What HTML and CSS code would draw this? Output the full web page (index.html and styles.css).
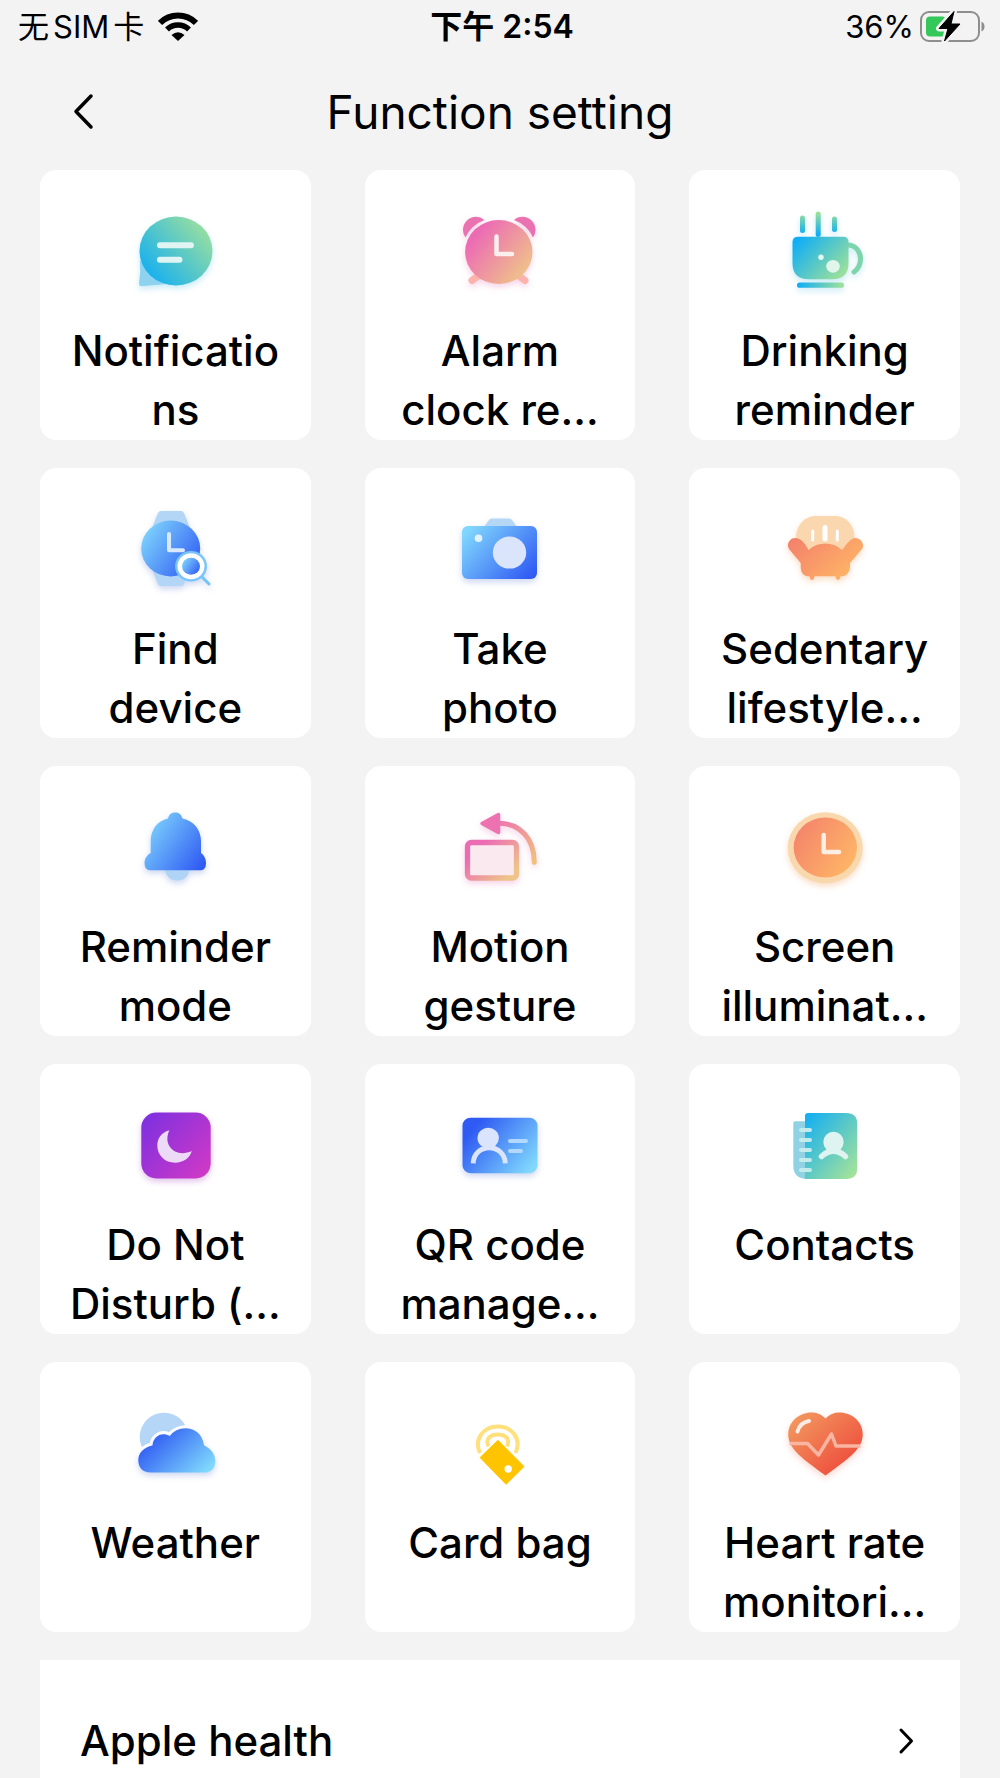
FILE: index.html
```html
<!DOCTYPE html>
<html lang="en">
<head>
    <meta charset="UTF-8">
    <meta name="viewport" content="width=device-width, initial-scale=1.0">
    <title>Function setting</title>
    <link rel="stylesheet" href="styles.css">
</head>
<body>
    <!-- shared gradients -->
    <svg class="defs" width="0" height="0" aria-hidden="true">
        <defs>
            <linearGradient id="teal" x1="0.1" y1="0.85" x2="0.9" y2="0.2"><stop offset="0" stop-color="#16b0f0"/><stop offset="1" stop-color="#94dda2"/></linearGradient>
            <linearGradient id="cup" x1="0" y1="0.2" x2="1" y2="0.9"><stop offset="0" stop-color="#10aef5"/><stop offset="1" stop-color="#a5e494"/></linearGradient>
            <linearGradient id="saucer" gradientUnits="userSpaceOnUse" x1="23" y1="0" x2="70" y2="0"><stop offset="0" stop-color="#10aef5"/><stop offset="1" stop-color="#a5e494"/></linearGradient>
            <linearGradient id="steam" gradientUnits="userSpaceOnUse" x1="0" y1="12" x2="0" y2="34"><stop offset="0" stop-color="#a0e395"/><stop offset="1" stop-color="#10aef5"/></linearGradient>
            <linearGradient id="book" x1="0" y1="0" x2="1" y2="1"><stop offset="0.05" stop-color="#16b0f0"/><stop offset="1" stop-color="#ade694"/></linearGradient>
            <linearGradient id="pink" x1="0.1" y1="0.15" x2="0.95" y2="0.8"><stop offset="0.1" stop-color="#ec6cb4"/><stop offset="1" stop-color="#efc488"/></linearGradient>
            <linearGradient id="pinkLine" gradientUnits="userSpaceOnUse" x1="40" y1="24" x2="84" y2="66"><stop offset="0" stop-color="#ec6cb4"/><stop offset="1" stop-color="#f1c080"/></linearGradient>
            <linearGradient id="blue" x1="0" y1="0.2" x2="1" y2="0.85"><stop offset="0" stop-color="#80d6fd"/><stop offset="1" stop-color="#2f5af3"/></linearGradient>
            <linearGradient id="blueBack" x1="0" y1="0.2" x2="1" y2="0.8"><stop offset="0.1" stop-color="#2f5af3"/><stop offset="1" stop-color="#80d9fd"/></linearGradient>
            <linearGradient id="orange" x1="0" y1="0.2" x2="1" y2="0.8"><stop offset="0" stop-color="#f4836b"/><stop offset="1" stop-color="#ffb866"/></linearGradient>
            <linearGradient id="purple" x1="0" y1="0.1" x2="1" y2="0.9"><stop offset="0" stop-color="#7d30e0"/><stop offset="1" stop-color="#d139c6"/></linearGradient>
            <linearGradient id="red" x1="0.1" y1="0.1" x2="0.8" y2="0.8"><stop offset="0" stop-color="#f2955d"/><stop offset="1" stop-color="#ee523f"/></linearGradient>
        </defs>
    </svg>

    <div class="page">
        <div class="status">
            <div class="status-left">
                <div class="carrier"><span>无</span><span>SIM</span><span>卡</span></div>
                <svg width="40" height="30" viewBox="0 0 40 30" aria-hidden="true">
                    <path d="M2 11A25.500 25.500 0 0 1 38 11" fill="none" stroke="#000" stroke-width="6"/>
                    <path d="M9 17.500A15.500 15.500 0 0 1 31 17.500" fill="none" stroke="#000" stroke-width="5.500"/>
                    <path d="M20 29L13.500 23Q20 17.500 26.500 23Z"/>
                </svg>
            </div>
            <div class="status-time">下午 2:54</div>
            <div class="status-right">
                <span>36%</span>
                <svg width="66" height="32" viewBox="0 0 66 32" aria-hidden="true">
                    <rect x="1" y="1" width="58" height="29" rx="8" fill="none" stroke="#8e8e8e" stroke-width="2"/>
                    <path d="M61.500 10.500Q64.500 12 64.500 15.500T61.500 20.500Z" fill="#8e8e8e"/>
                    <rect x="6" y="5.500" width="20" height="20" rx="4" fill="#34c759"/>
                    <path d="M34 0.500L19 17.500H28L24.500 30L40 13H31Z" stroke="#f3f3f3" stroke-width="6" stroke-linejoin="round" fill="#f3f3f3"/>
                    <path d="M34 0.500L19 17.500H28L24.500 30L40 13H31Z" stroke="#000" stroke-linejoin="round"/>
                </svg>
            </div>
        </div>

        <header class="header">
            <button class="back" type="button" aria-label="Back">
                <svg width="24" height="38" viewBox="0 0 24 38" aria-hidden="true"><path d="M19 3L4 18.500L19 34" fill="none" stroke="#000" stroke-width="3.500" stroke-linecap="round" stroke-linejoin="round"/></svg>
            </button>
            <h1>Function setting</h1>
        </header>

        <main class="grid">
            <button class="card" type="button">
                <svg class="icon glow-teal" viewBox="0 0 100 100" aria-hidden="true">
                    <path d="M15 60Q16 72 14 83Q14 87 18 86L42 84Z" fill="#8dd3f0"/>
                    <ellipse cx="51" cy="51" rx="36.500" ry="34.500" fill="url(#teal)"/>
                    <path d="M35 45.300H66M35 59.700H54.500" stroke="#e0f4f3" stroke-width="6" stroke-linecap="round"/>
                </svg>
                <span class="label">Notificatio<br>ns</span>
            </button>
            <button class="card" type="button">
                <svg class="icon glow-pink" viewBox="0 0 100 100" aria-hidden="true">
                    <path d="M22 80.500L32 73M75 80.500L65 73" stroke="#fdb3ac" stroke-width="7" stroke-linecap="round"/>
                    <path d="M34.500 20A13 13 0 0 0 15.500 37.500Q21 25 34.500 20ZM64 20A13 13 0 0 1 83 37.500Q77.500 25 64 20Z" fill="#eb72b0"/>
                    <ellipse cx="48.800" cy="52" rx="33.700" ry="32" fill="url(#pink)"/>
                    <path d="M46.500 36.500V54H62" fill="none" stroke="#fdeef0" stroke-width="4.500" stroke-linecap="round" stroke-linejoin="round"/>
                </svg>
                <span class="label">Alarm<br>clock re…</span>
            </button>
            <button class="card" type="button">
                <svg class="icon glow-teal" viewBox="0 0 100 100" aria-hidden="true">
                    <path d="M27.500 18V30.500M43.200 14V34.500M59.500 19V29.500" stroke="url(#steam)" stroke-width="5" stroke-linecap="round"/>
                    <path d="M74 45C82 46 85.500 53 85.500 59C85.500 65 83 69 79 72" fill="none" stroke="#7dd5ab" stroke-width="5" stroke-linecap="round"/>
                    <path d="M23 36.700H68Q73.500 36.700 73.500 42V63Q73.500 79.300 57 79.300H34Q17.500 79.300 17.500 63V42Q17.500 36.700 23 36.700Z" fill="url(#cup)"/>
                    <rect x="22" y="82.500" width="47" height="5.300" rx="2.600" fill="url(#saucer)"/>
                    <circle cx="46" cy="57.300" r="2.700" fill="#e6f8f4"/>
                    <ellipse cx="58" cy="66.300" rx="6.800" ry="6.400" fill="#e0f6ea"/>
                </svg>
                <span class="label">Drinking<br>reminder</span>
            </button>

            <button class="card" type="button">
                <svg class="icon glow-blue" viewBox="0 0 100 100" aria-hidden="true">
                    <path d="M36 13H56Q58 13 59 15L65 30V71L59 86Q58 88 56 88H36Q34 88 33 86L27 71V30L33 15Q34 13 36 13Z" fill="#b3d5f6"/>
                    <ellipse cx="45.700" cy="50.500" rx="29.500" ry="28" fill="url(#blue)"/>
                    <path d="M44 36V52.300H58" fill="none" stroke="#dbe9fd" stroke-width="4" stroke-linecap="round" stroke-linejoin="round"/>
                    <path d="M76 78L84 86" stroke="#72c3fb" stroke-width="3" stroke-linecap="round"/>
                    <ellipse cx="66" cy="68.300" rx="16" ry="15.300" fill="#78c4fc"/>
                    <ellipse cx="66" cy="68.300" rx="13.500" ry="13" fill="#fff"/>
                    <ellipse cx="66" cy="68.300" rx="9" ry="8.500" fill="url(#blue)"/>
                </svg>
                <span class="label">Find<br>device</span>
            </button>
            <button class="card" type="button">
                <svg class="icon glow-blue" viewBox="0 0 100 100" aria-hidden="true">
                    <path d="M34 29L39 22Q40 20.500 42 20.500H59Q61 20.500 62 22L67 29Z" fill="#b5d7f6"/>
                    <rect x="12" y="28" width="75" height="53" rx="6" fill="url(#blue)"/>
                    <circle cx="28.500" cy="40.300" r="3.800" fill="#e3f3fe"/>
                    <ellipse cx="59.500" cy="54.600" rx="16.700" ry="16" fill="#dae5fc"/>
                </svg>
                <span class="label">Take<br>photo</span>
            </button>
            <button class="card" type="button">
                <svg class="icon glow-orange" viewBox="0 0 100 100" aria-hidden="true">
                    <path d="M21 41C21 26 30 18 42 18H59C71 18 79.500 26 79.500 41L68 60H33Z" fill="#fad7ae"/>
                    <path d="M37.700 33V42M62.300 33V42" stroke="#fff" stroke-width="3" stroke-linecap="round"/>
                    <path d="M50 29.500V41" stroke="#fff" stroke-width="5" stroke-linecap="round"/>
                    <path d="M20 40C26 40 30 45 33.500 52Q41 45.600 50.300 45.600T67 52C70 48 74 43 77 41C83 37 91 45 87 51L75 65V68C75 75 71 78.300 66 78.300H65.500Q65 82 63 82T60.500 78.300H39.500Q39 82 37 82T34.500 78.300H34C29 78.300 25.700 75 25.700 69V65L14 51C11 46 15 40 20 40Z" fill="url(#orange)"/>
                </svg>
                <span class="label">Sedentary<br>lifestyle…</span>
            </button>

            <button class="card" type="button">
                <svg class="icon glow-blue" viewBox="0 0 100 100" aria-hidden="true">
                    <path d="M40 72H64.500C64.500 80 59 84.500 52.300 84.500S40 80 40 72Z" fill="#b0d4f6"/>
                    <path d="M43 22.500C44 18 47 16.500 50.300 16.500S56 18 57.500 22.500C69 25 76 34 76 45V57C79 59 81 63 81 67Q81 74.200 76 74.200H25Q19.500 74.200 19.500 67C19.500 63 22 59 25.700 57V45C25.700 34 32 25 43 22.500Z" fill="url(#blue)"/>
                </svg>
                <span class="label">Reminder<br>mode</span>
            </button>
            <button class="card" type="button">
                <svg class="icon glow-pink" viewBox="0 0 100 100" aria-hidden="true">
                    <rect x="17.500" y="46.500" width="49" height="35.500" rx="4" fill="#fae9ef" stroke="url(#pink)" stroke-width="5.300"/>
                    <path d="M49 27.200C70 27.200 84.500 43 84.300 66.500" fill="none" stroke="url(#pinkLine)" stroke-width="5" stroke-linecap="round"/>
                    <path d="M32 27.500L48.500 18.500V36.500Z" fill="#ec72b0" stroke="#ec72b0" stroke-width="3.500" stroke-linejoin="round"/>
                </svg>
                <span class="label">Motion<br>gesture</span>
            </button>
            <button class="card" type="button">
                <svg class="icon glow-orange" viewBox="0 0 100 100" aria-hidden="true">
                    <ellipse cx="50.300" cy="51.800" rx="37.500" ry="35.500" fill="#fad8ae"/>
                    <ellipse cx="50.300" cy="51.500" rx="31.700" ry="30" fill="url(#orange)"/>
                    <path d="M48.700 39V56H64" fill="none" stroke="#fdeee4" stroke-width="4.500" stroke-linecap="round" stroke-linejoin="round"/>
                </svg>
                <span class="label">Screen<br>illuminat…</span>
            </button>

            <button class="card" type="button">
                <svg class="icon glow-purple" viewBox="0 0 100 100" aria-hidden="true">
                    <rect x="16.300" y="18.500" width="69.400" height="66" rx="15" fill="url(#purple)"/>
                    <path d="M44.300 36.300C36 38.500 32.300 45 32.300 51.500C32.300 61.500 40 68.700 50 68.700C58.500 68.700 65 64 66.700 57C52 64 37 53 44.300 36.300Z" fill="#eddaf6"/>
                </svg>
                <span class="label">Do Not<br>Disturb (…</span>
            </button>
            <button class="card" type="button">
                <svg class="icon glow-blue" viewBox="0 0 100 100" aria-hidden="true">
                    <rect x="12.500" y="23.700" width="75" height="55.500" rx="8" fill="url(#blueBack)"/>
                    <ellipse cx="38.200" cy="44" rx="10.700" ry="10.200" fill="#dae5fd"/>
                    <path d="M23.200 69.300C23.500 60 30.500 53.700 39.200 53.700S55 60 55.300 69.300" fill="none" stroke="#dae5fd" stroke-width="5"/>
                    <path d="M60 47H76M60 57H71" stroke="#b3d8fd" stroke-width="4" stroke-linecap="round"/>
                </svg>
                <span class="label">QR code<br>manage…</span>
            </button>
            <button class="card" type="button">
                <svg class="icon" viewBox="0 0 100 100" aria-hidden="true">
                    <path d="M20 27.300H31V85Q18.300 84 18.300 72V29Q18.300 27.300 20 27.300Z" fill="#90d2e3"/>
                    <path d="M33 19H71Q82.300 19 82.300 30V74Q82.300 85 71 85H30V22Q30 19 33 19Z" fill="url(#book)"/>
                    <path d="M26 36H35M26 46H35M26 56H35M26 66H35M26 76H35" stroke="#c4ebec" stroke-width="4" stroke-linecap="round"/>
                    <circle cx="58.500" cy="48" r="10.200" fill="#def4f0"/>
                    <path d="M46.500 62.500Q58.500 51.500 70.500 62.500" fill="none" stroke="#def4f0" stroke-width="5.500" stroke-linecap="round"/>
                </svg>
                <span class="label">Contacts</span>
            </button>

            <button class="card" type="button">
                <svg class="icon" viewBox="0 0 100 100" aria-hidden="true">
                    <circle cx="39" cy="45" r="24.300" fill="#b5d6f6"/>
                    <path d="M26 80.600C17 80.600 13.300 75 13.300 68C13.300 61 19 55 27.500 53.500C28 45 36 39 45 44C52 33 76 32 79 53.300C86 57 90.300 62 90.300 69C90.300 76 86 80.600 79 80.600Z" fill="#fff" stroke="#fff" stroke-width="6" stroke-linejoin="round"/>
                    <path class="glow-blue" d="M26 80.600C17 80.600 13.300 75 13.300 68C13.300 61 19 55 27.500 53.500C28 45 36 39 45 44C52 33 76 32 79 53.300C86 57 90.300 62 90.300 69C90.300 76 86 80.600 79 80.600Z" fill="url(#blueBack)"/>
                </svg>
                <span class="label">Weather</span>
            </button>
            <button class="card" type="button">
                <svg class="icon" viewBox="0 0 100 100" aria-hidden="true">
                    <path d="M30 61C23.500 47 33.500 34.500 47.800 34.500S72 47 65.500 61M38.500 54.500C34.500 46 41.500 42.500 47.800 42.500S61 46 57 54.500" fill="none" stroke="#ffe07c" stroke-width="4"/>
                    <path d="M48 48.300L74 74.500L56.100 92.300L30.100 65.600Z" fill="#fec400" stroke="#fec400" stroke-linejoin="round"/>
                    <circle cx="58.200" cy="77" r="3.700" fill="#fff"/>
                </svg>
                <span class="label">Card bag</span>
            </button>
            <button class="card" type="button">
                <svg class="icon glow-red" viewBox="0 0 100 100" aria-hidden="true">
                    <path d="M50.500 26.500C56 20 66 19 73 22C84 26 90 37 87 48C84 59 73 67 50.500 83.500C28 67 17 59 14 48C11 37 17 26 28 22C35 19 45 20 50.500 26.500Z" fill="url(#red)"/>
                    <path d="M22.500 39.500C24 34 28 30 34 29" fill="none" stroke="#fdeae3" stroke-width="4" stroke-linecap="round"/>
                    <path d="M14.500 51.500H32.500L43.500 63L56.500 42L61 54H85.500" fill="none" stroke="#f8b5a2" stroke-width="3.500" stroke-linejoin="round"/>
                </svg>
                <span class="label">Heart rate<br>monitori…</span>
            </button>
        </main>

        <section class="list">
            <a class="list-row" href="#">
                <span>Apple health</span>
                <svg width="16" height="28" viewBox="0 0 16 28" aria-hidden="true"><path d="M3 3L13.500 14L3 25" fill="none" stroke="#000" stroke-width="3" stroke-linecap="round" stroke-linejoin="round"/></svg>
            </a>
        </section>
    </div>
</body>
</html>
```
FILE: styles.css
```css
* {
    box-sizing: border-box;
}
body {
    margin: 0;
    background-color: #f3f3f3;
    color: #000;
    font-family: Inter, "Noto Sans CJK SC", sans-serif;
}
button {
    border: 0;
    padding: 0;
    background: none;
    font: inherit;
    color: inherit;
}
.defs {
    position: absolute;
}
.page {
    display: flex;
    flex-direction: column;
    min-height: 100vh;
    padding: 0 40px;
}

/* status bar */
.status {
    display: grid;
    grid-template-columns: 1fr auto 1fr;
    align-items: center;
    height: 54px;
    margin: 0 -26px 0 -22px;
    font-size: 31px;
    line-height: 54px;
}
.status-left, .status-right {
    display: flex;
    align-items: center;
}
.status-left {
    gap: 14px;
}
.carrier {
    display: flex;
    gap: 4px;
}
.status-right {
    justify-content: flex-end;
    gap: 6px;
}
.status-time {
    font-size: 32px;
    font-weight: 600;
}

/* title bar */
.header {
    display: grid;
    grid-template-columns: 64px 1fr 64px;
    align-items: center;
    height: 116px;
}
.back {
    display: flex;
    justify-content: flex-end;
    padding-right: 8px;
}
.header h1 {
    margin: 0;
    font-size: 46px;
    line-height: 56px;
    font-weight: 400;
    text-align: center;
}

/* function cards */
.grid {
    display: grid;
    grid-template-columns: repeat(3, 1fr);
    gap: 28px 54px;
}
.card {
    display: flex;
    flex-direction: column;
    align-items: center;
    min-height: 270px;
    padding-top: 30px;
    border-radius: 16px;
    background-color: #fff;
}
.icon {
    width: 100px;
    height: 100px;
    margin-bottom: 21px;
}
.label {
    font-size: 42px;
    font-weight: 500;
    line-height: 59px;
    white-space: nowrap;
}
.glow-teal { filter: drop-shadow(0 3px 3px rgba(30, 170, 220, 0.25)); }
.glow-pink { filter: drop-shadow(0 3px 3px rgba(220, 80, 160, 0.25)); }
.glow-blue { filter: drop-shadow(0 3px 3px rgba(50, 90, 200, 0.25)); }
.glow-orange { filter: drop-shadow(0 3px 3px rgba(240, 140, 60, 0.3)); }
.glow-purple { filter: drop-shadow(0 3px 3px rgba(160, 50, 190, 0.3)); }
.glow-red { filter: drop-shadow(0 3px 3px rgba(240, 90, 60, 0.25)); }

/* bottom list */
.list {
    flex: 1;
    margin-top: 28px;
    padding: 51px 46px 0 40px;
    background-color: #fff;
}
.list-row {
    display: flex;
    align-items: center;
    justify-content: space-between;
    color: inherit;
    font-size: 42px;
    font-weight: 500;
    line-height: 59px;
    text-decoration: none;
}
```
